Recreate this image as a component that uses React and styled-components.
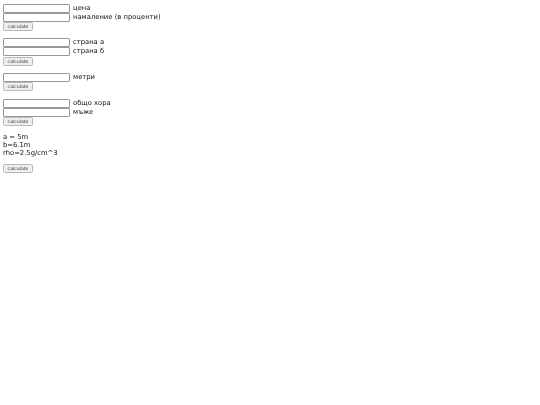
import styled, { createGlobalStyle } from "styled-components";

const GlobalStyle = createGlobalStyle`
  html, body {
    margin: 0;
    padding: 0;
    background: #ffffff;
  }
  body {
    padding: 4px 3px;
    font-family: "DejaVu Sans", "Liberation Sans", sans-serif;
    font-size: 6.8px;
    color: #111111;
  }
`;

const Page = styled.div`
  display: flex;
  flex-direction: column;
  align-items: flex-start;
  filter: grayscale(1);
`;

const Block = styled.div`
  display: flex;
  flex-direction: column;
  align-items: flex-start;
  margin-bottom: ${(p) => (p.$gap === undefined ? 7 : p.$gap)}px;
`;

const Row = styled.div`
  display: flex;
  flex-direction: row;
  align-items: center;
  height: 9px;
`;

const Field = styled.input`
  box-sizing: border-box;
  width: 67px;
  height: 8.5px;
  margin: 0 3px 0 0;
  padding: 0;
  border: 1px solid #999999;
  border-radius: 1px;
  background: #ffffff;
`;

const Label = styled.span`
  line-height: 9px;
  white-space: nowrap;
`;

const CalcBtn = styled.button`
  box-sizing: border-box;
  width: 30px;
  height: 9px;
  margin-top: ${(p) => p.$top || 0}px;
  padding: 0;
  border: 1px solid #b8b8b8;
  border-radius: 1.5px;
  background: #efefef;
  color: #333333;
  font-family: "DejaVu Sans", "Liberation Sans", sans-serif;
  font-size: 4.6px;
  line-height: 7px;
`;

const Info = styled.div`
  line-height: 8px;
  white-space: nowrap;
`;

const FieldRow = ({ label }) => (
  <Row>
    <Field />
    <Label>{label}</Label>
  </Row>
);

export default function App() {
  return (
    <>
      <GlobalStyle />
      <Page>
        <Block>
          <FieldRow label="цена" />
          <FieldRow label="намаление (в проценти)" />
          <CalcBtn>calculate</CalcBtn>
        </Block>
        <Block>
          <FieldRow label="страна а" />
          <FieldRow label="страна б" />
          <CalcBtn $top={1}>calculate</CalcBtn>
        </Block>
        <Block $gap={8}>
          <FieldRow label="метри" />
          <CalcBtn>calculate</CalcBtn>
        </Block>
        <Block>
          <FieldRow label="общо хора" />
          <FieldRow label="мъже" />
          <CalcBtn>calculate</CalcBtn>
        </Block>
        <Block $gap={0}>
          <Info>a = 5m</Info>
          <Info>b=6.1m</Info>
          <Info>rho=2.5g/cm^3</Info>
          <CalcBtn $top={7}>calculate</CalcBtn>
        </Block>
      </Page>
    </>
  );
}
